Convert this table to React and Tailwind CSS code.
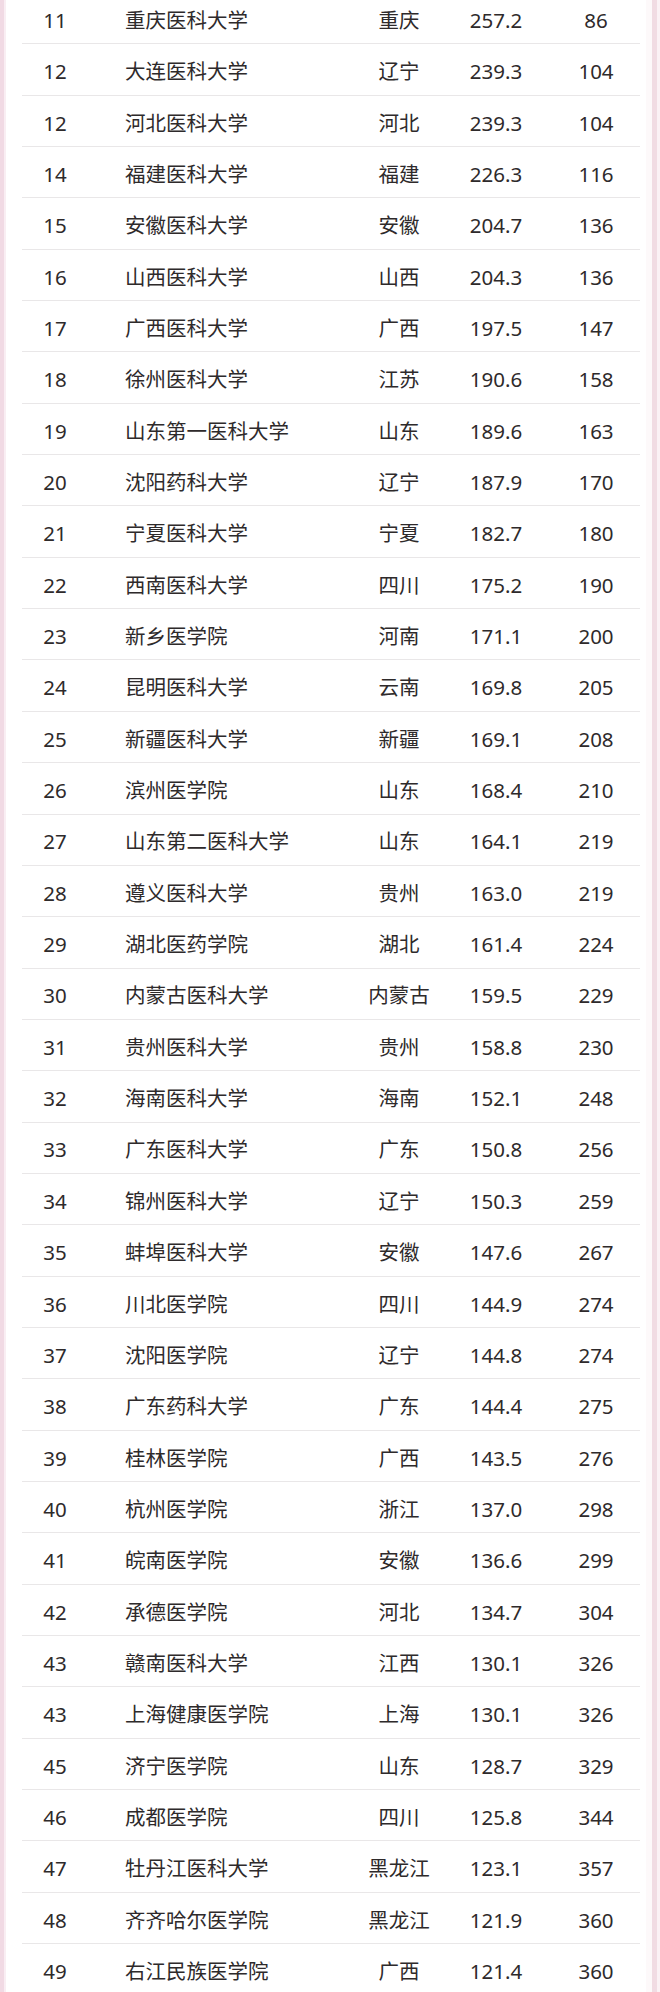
const ROWS = [
  ['11', '重庆医科大学', '重庆', '257.2', '86'],
  ['12', '大连医科大学', '辽宁', '239.3', '104'],
  ['12', '河北医科大学', '河北', '239.3', '104'],
  ['14', '福建医科大学', '福建', '226.3', '116'],
  ['15', '安徽医科大学', '安徽', '204.7', '136'],
  ['16', '山西医科大学', '山西', '204.3', '136'],
  ['17', '广西医科大学', '广西', '197.5', '147'],
  ['18', '徐州医科大学', '江苏', '190.6', '158'],
  ['19', '山东第一医科大学', '山东', '189.6', '163'],
  ['20', '沈阳药科大学', '辽宁', '187.9', '170'],
  ['21', '宁夏医科大学', '宁夏', '182.7', '180'],
  ['22', '西南医科大学', '四川', '175.2', '190'],
  ['23', '新乡医学院', '河南', '171.1', '200'],
  ['24', '昆明医科大学', '云南', '169.8', '205'],
  ['25', '新疆医科大学', '新疆', '169.1', '208'],
  ['26', '滨州医学院', '山东', '168.4', '210'],
  ['27', '山东第二医科大学', '山东', '164.1', '219'],
  ['28', '遵义医科大学', '贵州', '163.0', '219'],
  ['29', '湖北医药学院', '湖北', '161.4', '224'],
  ['30', '内蒙古医科大学', '内蒙古', '159.5', '229'],
  ['31', '贵州医科大学', '贵州', '158.8', '230'],
  ['32', '海南医科大学', '海南', '152.1', '248'],
  ['33', '广东医科大学', '广东', '150.8', '256'],
  ['34', '锦州医科大学', '辽宁', '150.3', '259'],
  ['35', '蚌埠医科大学', '安徽', '147.6', '267'],
  ['36', '川北医学院', '四川', '144.9', '274'],
  ['37', '沈阳医学院', '辽宁', '144.8', '274'],
  ['38', '广东药科大学', '广东', '144.4', '275'],
  ['39', '桂林医学院', '广西', '143.5', '276'],
  ['40', '杭州医学院', '浙江', '137.0', '298'],
  ['41', '皖南医学院', '安徽', '136.6', '299'],
  ['42', '承德医学院', '河北', '134.7', '304'],
  ['43', '赣南医科大学', '江西', '130.1', '326'],
  ['43', '上海健康医学院', '上海', '130.1', '326'],
  ['45', '济宁医学院', '山东', '128.7', '329'],
  ['46', '成都医学院', '四川', '125.8', '344'],
  ['47', '牡丹江医科大学', '黑龙江', '123.1', '357'],
  ['48', '齐齐哈尔医学院', '黑龙江', '121.9', '360'],
  ['49', '右江民族医学院', '广西', '121.4', '360'],
]

function RankRow({ row, last }) {
  const [rank, name, province, score, place] = row
  return (
    <div
      className={`grid h-[51.35px] grid-cols-[66px_262px_98px_96px_96px] items-center pt-[4px] ${
        last ? '' : 'border-b border-[#e9e7e8]'
      }`}
    >
      <span className="text-center">{rank}</span>
      <span className="pl-[37px]">{name}</span>
      <span className="text-center">{province}</span>
      <span className="text-center">{score}</span>
      <span className="pl-[8px] text-center">{place}</span>
    </div>
  )
}

export default function App() {
  return (
    <div className="h-[1992px] w-[660px] overflow-hidden bg-white">
      <div className="flex h-full">
        {/* pink frame, left */}
        <div className="w-[4px] shrink-0 bg-[#f1dae4]" />
        <div className="w-[2px] shrink-0 bg-[#f9eef3]" />

        <div
          className="flex-1 pl-[16px] pr-[6px] text-[20.5px] leading-none text-[#2e2a2b]"
          style={{ fontFamily: '"Noto Sans", "Noto Sans CJK SC", sans-serif' }}
        >
          <div className="-mt-[7px]">
            {ROWS.map((row, i) => (
              <RankRow key={i} row={row} last={i === ROWS.length - 1} />
            ))}
          </div>
        </div>

        {/* pink frame, right */}
        <div className="w-[6px] shrink-0 bg-[#fdf9fa]" />
        <div className="w-[5px] shrink-0 bg-[#f1dce3]" />
        <div className="w-[3px] shrink-0 bg-[#fbf2f5]" />
      </div>
    </div>
  )
}
